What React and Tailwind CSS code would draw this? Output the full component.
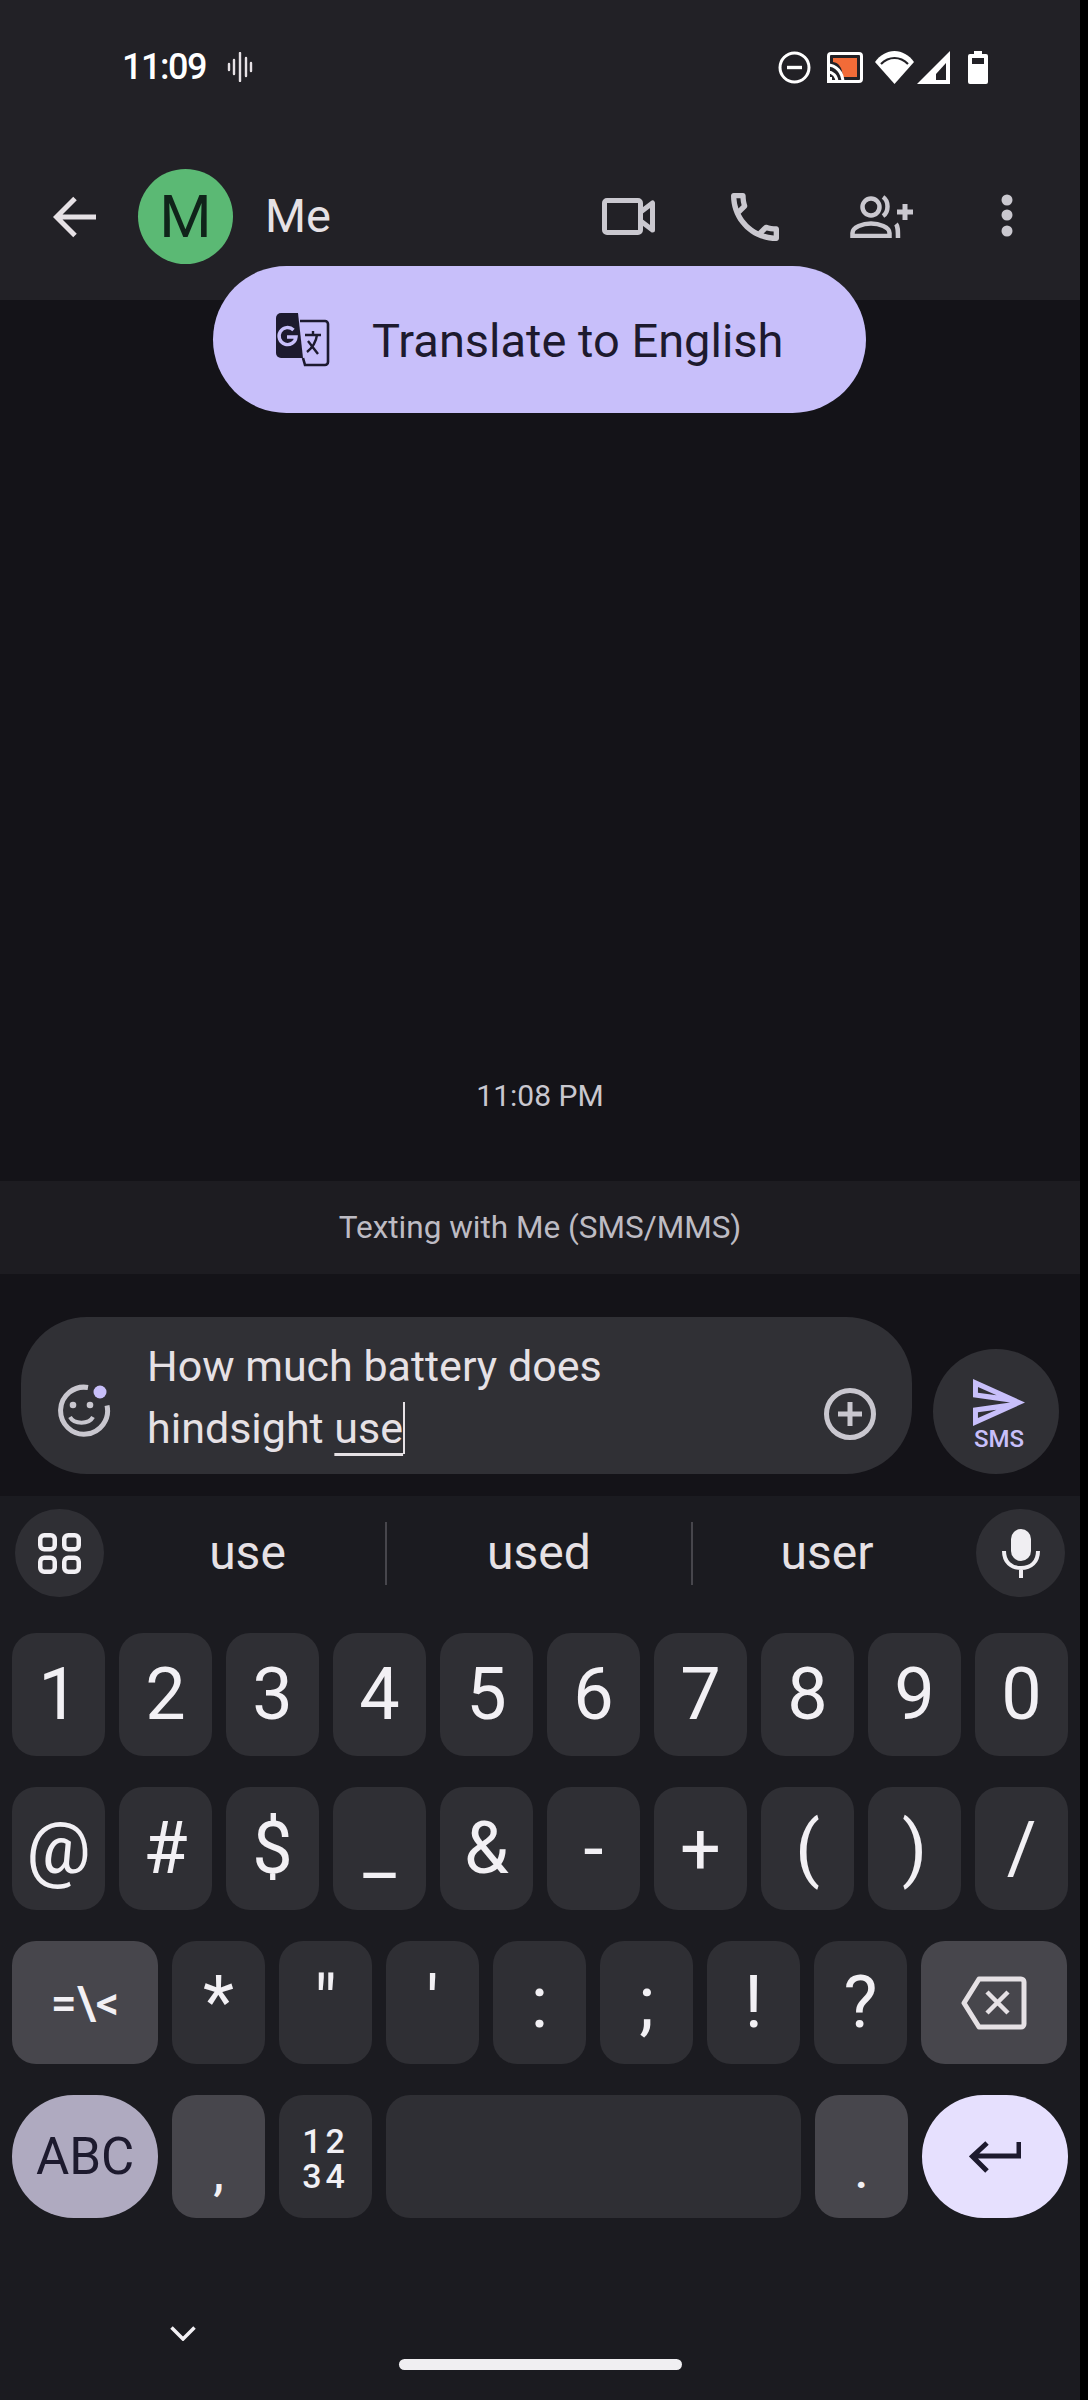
import React from 'react';

const FONT = 'font-[Roboto,"Noto_Sans",sans-serif]';

const WaveIcon = () => (
  <svg width="26" height="30" viewBox="0 0 26 30" stroke="#e6e1e5" strokeWidth="2.4" strokeLinecap="round">
    <path d="M2 12v6M7 8v14M13 1v28M19 6v18M24 11v8" />
  </svg>
);

const StatusIcons = () => (
  <div className="flex items-center">
    <svg width="33" height="33" viewBox="0 0 33 33" fill="none" stroke="#fff">
      <circle cx="16.5" cy="16.5" r="14.5" strokeWidth="3" />
      <path d="M9 16.5h15" strokeWidth="3.4" />
    </svg>
    <svg className="ml-[16px]" width="37" height="31" viewBox="0 0 37 31">
      <rect x="1.5" y="1.5" width="33" height="28" rx="2.5" fill="#222126" stroke="#fff" strokeWidth="3" />
      <path d="M6 6h24v19H16C15 15 12 11 6 10z" fill="#f26b38" />
      <path d="M0 13c9 0 16 7 16 18M0 20c6 0 10 4 10 11" fill="none" stroke="#fff" strokeWidth="3" />
      <path d="M0 25h5v6H0z" fill="#fff" />
    </svg>
    <svg className="ml-[11px]" width="39" height="33" viewBox="0 0 39 33">
      <path d="M0 11C5 4 12 0 19.500 0S34 4 39 11L19.500 33Z" fill="#fff" />
      <path d="M6 13C10 9 14.500 7 19.500 7S29 9 33 13" fill="none" stroke="#222126" strokeWidth="2.2" />
    </svg>
    <svg className="ml-[3px]" width="33" height="33" viewBox="0 0 33 33">
      <path d="M0 33L33 0V33Z" fill="#fff" />
      <path d="M19 23L29 12V29H19Z" fill="#222126" />
    </svg>
    <svg className="ml-[18px]" width="20" height="33" viewBox="0 0 20 33">
      <path d="M6 0h8v3h4a2 2 0 0 1 2 2v26a2 2 0 0 1-2 2H2a2 2 0 0 1-2-2V5a2 2 0 0 1 2-2h4z" fill="#fff" />
      <rect x="4" y="7" width="12" height="6" fill="#222126" />
    </svg>
  </div>
);

const BackIcon = () => (
  <svg width="43" height="42" viewBox="0 0 43 42" fill="none" stroke="#e6e1e5" strokeWidth="5">
    <path d="M43 21H4M22 2.500L3.500 21 22 39.500" />
  </svg>
);

const VideoIcon = () => (
  <svg width="53" height="37" viewBox="0 0 53 37" fill="none" stroke="#cac8cf" strokeWidth="5" strokeLinejoin="round">
    <rect x="2.500" y="2.500" width="36" height="32" rx="2.500" />
    <path d="M38 14.500L50.500 5V32L38 22.500" />
  </svg>
);

const PhoneIcon = () => (
  <svg width="48" height="48" viewBox="3 3 18 18" fill="#cac8cf">
    <path d="M6.540 5c.06.890.21 1.760.45 2.590l-1.200 1.200c-.41-1.200-.67-2.470-.76-3.790h1.510m9.860 12.020c.85.24 1.720.39 2.600.45v1.490c-1.320-.09-2.590-.35-3.800-.75l1.200-1.190M7.500 3H4c-.55 0-1 .45-1 1 0 9.390 7.610 17 17 17 .55 0 1-.45 1-1v-3.490c0-.55-.45-1-1-1-1.240 0-2.450-.2-3.570-.57-.1-.04-.21-.05-.31-.05-.26 0-.51.1-.71.29l-2.200 2.200c-2.830-1.450-5.150-3.760-6.590-6.590l2.200-2.200c.28-.28.36-.67.25-1.020C8.700 6.450 8.500 5.250 8.500 4c0-.55-.45-1-1-1z" />
  </svg>
);

const AddPersonIcon = () => (
  <svg width="63" height="43" viewBox="0 0 63 43" fill="none" stroke="#cac8cf" strokeWidth="4.500">
    <circle cx="21" cy="12" r="8.500" />
    <path d="M2.500 41v-3c0-6 10.500-9.500 18.500-9.500s18.500 3.500 18.500 9.500v3z" />
    <path d="M33 2c6 4 6 15 0 19" />
    <path d="M46 29c2 2.500 2 6 2 14" />
    <path d="M47 17h16M55 9v16" strokeWidth="5" />
  </svg>
);

const DotsIcon = () => (
  <svg width="12" height="48" viewBox="0 0 12 48" fill="#cac8cf">
    <circle cx="6" cy="7" r="5.500" />
    <circle cx="6" cy="22" r="5.500" />
    <circle cx="6" cy="38" r="5.500" />
  </svg>
);

const TranslateIcon = () => (
  <svg width="54" height="54" viewBox="0 0 54 54" fill="none">
    <path d="M5 0H22L27 45H5a5 5 0 0 1-5-5V5a5 5 0 0 1 5-5z" fill="#1d1a2e" />
    <path d="M24 8H49a3 3 0 0 1 3 3V49a3 3 0 0 1-3 3H29L27 45" stroke="#1d1a2e" strokeWidth="2.600" />
    <path d="M17.500 17a8.500 8.500 0 1 0 2.500 7H11" stroke="#c8bffa" strokeWidth="3.400" />
    <path d="M29 22H45M37 18v4M41 22c-1 7-5 13-10 17M32 28l10 13" stroke="#1d1a2e" strokeWidth="2.400" />
  </svg>
);

const EmojiIcon = () => (
  <svg width="60" height="56" viewBox="0 0 60 56" fill="none">
    <path d="M33 3.500a23.500 23.500 0 1 0 19 18" stroke="#c9c7cf" strokeWidth="5" />
    <circle cx="45" cy="8" r="6.500" fill="#c8bffa" />
    <circle cx="18" cy="21" r="3.300" fill="#c9c7cf" />
    <circle cx="35" cy="21" r="3.300" fill="#c9c7cf" />
    <path d="M15 33c4 7.500 19 7.500 23 0" stroke="#c9c7cf" strokeWidth="4" />
  </svg>
);

const PlusCircleIcon = () => (
  <svg width="52" height="52" viewBox="0 0 52 52" fill="none" stroke="#c9c7cf">
    <circle cx="26" cy="26" r="23.500" strokeWidth="5" />
    <path d="M14 26h24M26 14v24" strokeWidth="5" />
  </svg>
);

const SendIcon = () => (
  <svg width="52" height="47" viewBox="2 3 21 18" preserveAspectRatio="none" fill="#c8bffa">
    <path d="M4.010 6.030l7.510 3.220-7.520-1 .01-2.220m7.500 8.720L4 17.970v-2.220l7.510-1M2.010 3L2 10l15 2-15 2 .01 7L23 12 2.010 3z" />
  </svg>
);

const GridIcon = () => (
  <svg width="43" height="41" viewBox="0 0 43 41" fill="none" stroke="#f2f0f4" strokeWidth="4.500">
    <rect x="2.250" y="2.250" width="14.500" height="14" rx="4" />
    <rect x="26.250" y="2.250" width="14.500" height="14" rx="4" />
    <rect x="2.250" y="24.750" width="14.500" height="14" rx="4" />
    <rect x="26.250" y="24.750" width="14.500" height="14" rx="4" />
  </svg>
);

const MicIcon = () => (
  <svg width="38" height="49" viewBox="0 0 38 49" fill="none">
    <rect x="9" y="0" width="20" height="32" rx="10" fill="#f0eef2" />
    <path d="M2 22c0 11 7 17 17 17s17-6 17-17M19 38v11" stroke="#f0eef2" strokeWidth="4" />
  </svg>
);

const BackspaceIcon = () => (
  <svg width="66" height="54" viewBox="0 0 66 54" fill="none" stroke="#e6e1e5">
    <path d="M18 3H60a3 3 0 0 1 3 3V48a3 3 0 0 1-3 3H18L3 27Z" strokeWidth="5" strokeLinejoin="round" />
    <path d="M26 16l21 21M47 16L26 37" strokeWidth="4.500" />
  </svg>
);

const EnterIcon = () => (
  <svg width="52" height="32" viewBox="0 0 52 32" fill="none" stroke="#1d1a2e" strokeWidth="5">
    <path d="M50 1v14H4M18 2L3.500 15.500 18 30" />
  </svg>
);

const Key = ({ children, className = 'w-[93px] bg-[#2f2f34]' }) => (
  <div className={`flex h-[123px] items-center justify-center rounded-[24px] text-[72px] leading-none font-normal text-[#f2f0f4] ${className}`}>
    {children}
  </div>
);

const FN_KEY = 'w-[93px] bg-[#47464c]';

export default function App() {
  return (
    <div className={`flex h-[2400px] bg-black ${FONT}`}>
      <div className="flex w-[1080px] flex-col bg-[#141318]">
        {/* Status bar and toolbar */}
        <div className="h-[300px] bg-[#222126]">
          <div className="flex h-[134px] items-center pr-[92px] pl-[122px]">
            <span className="text-[36px] font-medium tracking-[-1.5px] text-white">11:09</span>
            <span className="ml-[21px]"><WaveIcon /></span>
            <span className="ml-auto"><StatusIcons /></span>
          </div>
          <div className="flex h-[165px] items-center pr-[67px] pl-[53px]">
            <BackIcon />
            <div className="ml-[42px] flex h-[95px] w-[95px] items-center justify-center rounded-full bg-[#5bb974] text-[60px] font-normal text-[#10241a]">M</div>
            <span className="ml-[32px] text-[47px] text-[#e6e1e5]">Me</span>
            <div className="ml-auto flex items-center">
              <VideoIcon />
              <span className="ml-[76px]"><PhoneIcon /></span>
              <span className="ml-[71px]"><AddPersonIcon /></span>
              <span className="ml-[88px]"><DotsIcon /></span>
            </div>
          </div>
        </div>

        {/* Conversation */}
        <div className="relative flex h-[881px] flex-col items-center justify-end pb-[66px]">
          <div className="absolute top-[-34px] left-[213px] flex h-[147px] w-[653px] items-center rounded-full bg-[#c8bffa] pl-[63px]">
            <TranslateIcon />
            <span className="mt-[3px] ml-[42px] text-[47px] text-[#1d1a2e]">Translate to English</span>
          </div>
          <span className="text-[30px] leading-[38px] text-[#c9c7cf]">11:08 PM</span>
        </div>

        <div className="flex h-[93px] items-center justify-center bg-[#1d1c21] text-[31.5px] text-[#bdbbc3]">
          Texting with Me (SMS/MMS)
        </div>

        {/* Compose */}
        <div className="flex h-[222px] items-start pt-[43px] pl-[21px]">
          <div className="flex h-[157px] w-[891px] items-end rounded-[66px] bg-[#303035] pb-[34px] pl-[34px]">
            <EmojiIcon />
            <div className="mb-[-19px] ml-[32px] w-[671px] self-end text-[43px] leading-[62px] text-[#e6e1e5]">
              <div>How much battery does</div>
              <div className="flex items-center">
                hindsight&nbsp;<span className="underline decoration-[3px] underline-offset-[10px]">use</span>
                <span className="h-[52px] w-[2px] bg-[#e6e1e5]" />
              </div>
            </div>
            <span className="ml-[6px]"><PlusCircleIcon /></span>
          </div>
          <div className="mt-[32px] ml-[21px] flex h-[125px] w-[126px] flex-col items-center rounded-full bg-[#303035] pt-[30px] pl-[6px]">
            <SendIcon />
            <span className="text-[24px] leading-[26px] font-medium text-[#c8bffa]">SMS</span>
          </div>
        </div>

        {/* Keyboard */}
        <div className="flex flex-1 flex-col bg-[#1b1b20]">
          <div className="flex h-[137px] items-start pt-[13px] pl-[15px]">
            <div className="flex h-[88px] w-[89px] items-center justify-center rounded-full bg-[#2f2f34]"><GridIcon /></div>
            <div className="flex h-[88px] w-[872px] items-center text-[48px] text-[#e6e1e5]">
              <span className="flex h-[63px] w-[283px] items-center justify-center border-r-2 border-[#47464c] pl-[6px]">use</span>
              <span className="flex h-[63px] w-[306px] items-center justify-center border-r-2 border-[#47464c]">used</span>
              <span className="flex h-[63px] w-[268px] items-center justify-center">user</span>
            </div>
            <div className="flex h-[88px] w-[89px] items-center justify-center rounded-full bg-[#2f2f34]"><MicIcon /></div>
          </div>

          <div className="flex flex-col gap-[31px] px-[12px]">
            <div className="flex gap-[14px]">
              {['1', '2', '3', '4', '5', '6', '7', '8', '9', '0'].map((k) => <Key key={k}>{k}</Key>)}
            </div>
            <div className="flex gap-[14px]">
              {['@', '#', '$', '_', '&', '-', '+', '(', ')', '/'].map((k) => <Key key={k}>{k}</Key>)}
            </div>
            <div className="flex gap-[14px]">
              <Key className="w-[146px] bg-[#47464c]"><span className="text-[46px] font-medium">=\&lt;</span></Key>
              {['*', '"', "'", ':', ';', '!', '?'].map((k) => <Key key={k}>{k}</Key>)}
              <Key className="w-[146px] bg-[#47464c]"><BackspaceIcon /></Key>
            </div>
            <div className="flex gap-[14px]">
              <Key className="w-[146px] !rounded-full bg-[#afaac0]"><span className="text-[51px] font-normal text-[#1d1a2e]">ABC</span></Key>
              <Key className={FN_KEY}><span className="mt-[32px] text-[48px] font-medium">,</span></Key>
              <Key className="w-[93px] bg-[#2f2f34]">
                <span className="mt-[5px] text-center text-[34px] leading-[35px] font-medium tracking-[4px]">12<br />34</span>
              </Key>
              <Key className="flex-1 bg-[#2f2f34]"> </Key>
              <Key className={FN_KEY}><span className="mt-[30px] text-[48px] font-medium">.</span></Key>
              <Key className="w-[146px] !rounded-full bg-[#e6e0fe]"><EnterIcon /></Key>
            </div>
          </div>

          {/* Navigation bar */}
          <div className="flex flex-1 flex-col">
            <svg className="mt-[108px] ml-[170px]" width="26" height="15" viewBox="0 0 26 15" fill="none" stroke="#f2f0f4" strokeWidth="3.500">
              <path d="M1.500 1.500L13 13 24.500 1.500" />
            </svg>
            <div className="mx-auto mt-[18px] h-[11px] w-[283px] rounded-full bg-[#f0eff2]" />
          </div>
        </div>
      </div>
    </div>
  );
}
